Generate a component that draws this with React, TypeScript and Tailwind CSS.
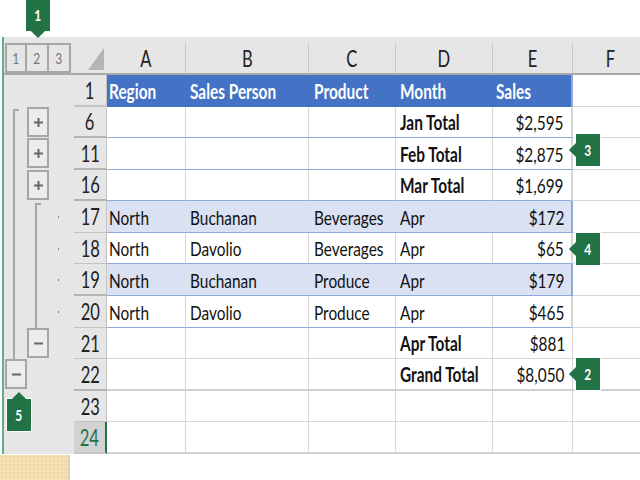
import React from "react";

type Kind = "head" | "plain" | "band" | "white" | "total" | "empty";
type Mark = "" | "plus" | "minus" | "line" | "top" | "dot";

interface Row {
    n: string;
    height: string;
    kind: Kind;
    cells: string[];
    gutter: [Mark, Mark, Mark];
    numBorder: string;
}

const rows: Row[] = [
    { n: "1", height: "h-[32px]", kind: "head", cells: ["Region", "Sales Person", "Product", "Month", "Sales"], gutter: ["", "", ""], numBorder: "border-b-2 border-b-[#c4c4c4]" },
    { n: "6", height: "h-[31px]", kind: "plain", cells: ["", "", "", "Jan Total", "$2,595"], gutter: ["top", "plus", ""], numBorder: "border-b-2 border-b-[#b4b4b4]" },
    { n: "11", height: "h-[32px]", kind: "plain", cells: ["", "", "", "Feb Total", "$2,875"], gutter: ["line", "plus", ""], numBorder: "border-b-2 border-b-[#b4b4b4]" },
    { n: "16", height: "h-[31px]", kind: "plain", cells: ["", "", "", "Mar Total", "$1,699"], gutter: ["line", "plus", ""], numBorder: "border-b-2 border-b-[#b4b4b4]" },
    { n: "17", height: "h-[32px]", kind: "band", cells: ["North", "Buchanan", "Beverages", "Apr", "$172"], gutter: ["line", "top", "dot"], numBorder: "border-b border-b-[#c4c4c4]" },
    { n: "18", height: "h-[31px]", kind: "white", cells: ["North", "Davolio", "Beverages", "Apr", "$65"], gutter: ["line", "line", "dot"], numBorder: "border-b border-b-[#c4c4c4]" },
    { n: "19", height: "h-[32px]", kind: "band", cells: ["North", "Buchanan", "Produce", "Apr", "$179"], gutter: ["line", "line", "dot"], numBorder: "border-b-2 border-b-[#b4b4b4]" },
    { n: "20", height: "h-[32px]", kind: "white", cells: ["North", "Davolio", "Produce", "Apr", "$465"], gutter: ["line", "line", "dot"], numBorder: "border-b border-b-[#c4c4c4]" },
    { n: "21", height: "h-[31px]", kind: "total", cells: ["", "", "", "Apr Total", "$881"], gutter: ["line", "minus", ""], numBorder: "border-b border-b-[#c4c4c4]" },
    { n: "22", height: "h-[32px]", kind: "total", cells: ["", "", "", "Grand Total", "$8,050"], gutter: ["minus", "", ""], numBorder: "border-b-2 border-b-[#b4b4b4]" },
    { n: "23", height: "h-[31px]", kind: "empty", cells: ["", "", "", "", ""], gutter: ["", "", ""], numBorder: "border-b border-b-[#c4c4c4]" },
    { n: "24", height: "h-[32px]", kind: "empty", cells: ["", "", "", "", ""], gutter: ["", "", ""], numBorder: "border-b-2 border-b-[#c4c4c4]" },
];

const columns = ["A", "B", "C", "D", "E", "F"];
const gridCols = "grid-cols-[70px_33px_79px_123px_87px_97px_80px_76px]";
const cellPad = ["pl-[2px]", "pl-[4px]", "pl-[5px]", "pl-[4px]", "pl-[3px]"];

function OutlineBox({ children }: { children: React.ReactNode }) {
    return (
        <div className="w-[22px] h-[30px] border-2 border-[#a6a6a6] bg-[#ececec] flex items-center justify-center">
            {children}
        </div>
    );
}

function PlusIcon() {
    return (
        <svg width="9" height="9" viewBox="0 0 9 9">
            <path d="M0 4.5H9M4.5 0V9" stroke="#666" strokeWidth="2" />
        </svg>
    );
}

function MinusIcon() {
    return (
        <svg width="9" height="3" viewBox="0 0 9 3">
            <path d="M0 1.5H9" stroke="#666" strokeWidth="2" />
        </svg>
    );
}

function GutterMark({ mark }: { mark: Mark }) {
    if (mark === "plus") return <OutlineBox><PlusIcon /></OutlineBox>;
    if (mark === "minus") return <OutlineBox><MinusIcon /></OutlineBox>;
    if (mark === "line") return <div className="h-full w-[2px] bg-[#a6a6a6] ml-[8px]" />;
    if (mark === "top") {
        return <div className="h-full mt-[2px] w-[6px] border-l-2 border-t-2 border-[#a6a6a6] ml-[8px]" />;
    }
    if (mark === "dot") {
        return (
            <div className="h-full flex items-center">
                <div className="w-[1px] h-[2px] ml-[9px] bg-[#8a8a8a]" />
            </div>
        );
    }
    return null;
}

function Callout({ label, place, arrow }: { label: string; place: string; arrow: "down" | "left" | "up" }) {
    const arrowPos =
        arrow === "down"
            ? "left-1/2 -bottom-[5px] -ml-[5px]"
            : arrow === "up"
              ? "left-1/2 -top-[5px] -ml-[5px]"
              : "top-1/2 -left-[5px] -mt-[5px]";
    return (
        <div className={`absolute ${place} w-[26px] h-[34px] bg-[#217346] border border-white flex items-center justify-center`}>
            <div className={`absolute ${arrowPos} w-[10px] h-[10px] rotate-45 bg-[#217346]`} />
            <span className="relative text-white text-[16px] font-bold scale-x-[0.75]">{label}</span>
        </div>
    );
}

function Text({ value, right }: { value: string; right?: boolean }) {
    return (
        <span className={`inline-block whitespace-nowrap scale-x-[0.77] ${right ? "origin-right" : "origin-left"}`}>
            {value}
        </span>
    );
}

function Cell({ row, value, index }: { row: Row; value: string; index: number }) {
    const isSales = index === 4;
    const bold = row.kind === "head" || (index === 3 && (row.kind === "plain" || row.kind === "total"));
    let look = "bg-white border-b border-r border-[#d6d6d6] text-[#111]";
    if (row.kind === "head") look = "bg-[#4472c4] text-white";
    if (row.kind === "plain" || row.kind === "white") look = "bg-white border-b border-r border-b-[#8ea9db] border-r-[#d6d6d6] text-[#111]";
    if (row.kind === "band") look = "bg-[#d9e1f2] border-b border-[#8ea9db] text-[#111]";
    if (row.n === "22" || row.n === "24") look = "bg-white border-b-2 border-r border-b-[#d0d0d0] border-r-[#d6d6d6] text-[#111]";
    const right = isSales && row.kind !== "head";
    const edge = isSales && row.kind !== "total" && row.kind !== "empty" ? "border-r-2 border-r-[#8ea9db]" : "";
    return (
        <div className={`flex items-center overflow-hidden text-[20px] leading-none ${look} ${edge} ${right ? "justify-end pr-[7px]" : cellPad[index]} ${bold ? "font-bold" : ""}`}>
            {value && <Text value={value} right={right} />}
        </div>
    );
}

export default function App() {
    return (
        <div className="relative w-[640px] h-[480px] overflow-hidden bg-white leading-none font-['Lato','Liberation_Sans',sans-serif]">
            <div className="h-[37px] bg-white" />
            <div className="ml-[2px] border-l-2 border-[#5fae84]">
                {/* column header */}
                <div className={`grid ${gridCols} h-[38px] bg-[#e6e6e6] border-b-2 border-[#a8a8a8]`}>
                    <div className="flex items-end pl-[1px]">
                        {["1", "2", "3"].map((n) => (
                            <div key={n} className="w-[22px] h-[30px] border-y-2 border-r-2 first:border-l-2 border-[#a6a6a6] flex items-center justify-center text-[#777] text-[16px]">
                                <span className="inline-block scale-x-[0.75]">{n}</span>
                            </div>
                        ))}
                    </div>
                    <div className="flex items-end justify-end pr-[3px] pb-[3px]">
                        <svg width="16" height="22" viewBox="0 0 16 22">
                            <polygon points="16,0 16,22 0,22" fill="#b5b5b5" />
                        </svg>
                    </div>
                    {columns.map((c) => (
                        <div key={c} className="flex items-center justify-center text-[23px] text-[#222] border-r border-[#c8c8c8] mt-[6px]">
                            <span className="inline-block scale-x-[0.72]">{c}</span>
                        </div>
                    ))}
                </div>
                {/* rows */}
                {rows.map((row) => (
                    <div key={row.n} className={`grid ${gridCols} ${row.height}`}>
                        <div className="grid grid-cols-[22px_22px_22px] pl-[1px] bg-[#e6e6e6]">
                            {row.gutter.map((m, i) => (
                                <div key={i} className="h-full min-h-0">
                                    <GutterMark mark={m} />
                                </div>
                            ))}
                        </div>
                        <div
                            className={`flex items-center justify-center text-[23px] border-r ${row.numBorder} ${
                                row.n === "24"
                                    ? "bg-[#d2d2d2] text-[#217346] border-r-2 border-r-[#217346]"
                                    : "bg-[#e6e6e6] text-[#222] border-r-[#c4c4c4]"
                            }`}
                        >
                            <span className="inline-block scale-x-[0.72]">{row.n}</span>
                        </div>
                        {row.cells.map((value, i) => (
                            <Cell key={i} row={row} value={value} index={i} />
                        ))}
                        <div className={`${row.n === "22" || row.n === "24" ? "border-b-2 border-[#d0d0d0]" : "border-b border-[#d6d6d6]"}`} />
                    </div>
                ))}
            </div>
            <div className="absolute left-0 bottom-0 w-[70px] h-[25px] border-r-2 border-[#d9d0bd] bg-[#f5e0b5] bg-[radial-gradient(#ecd3a0_1px,transparent_1px)] bg-[length:4px_4px]" />

            <Callout label="1" place="left-[25px] -top-[2px]" arrow="down" />
            <Callout label="2" place="left-[575px] top-[357px]" arrow="left" />
            <Callout label="3" place="left-[575px] top-[133px]" arrow="left" />
            <Callout label="4" place="left-[575px] top-[232px]" arrow="left" />
            <Callout label="5" place="left-[6px] top-[398px]" arrow="up" />
        </div>
    );
}
